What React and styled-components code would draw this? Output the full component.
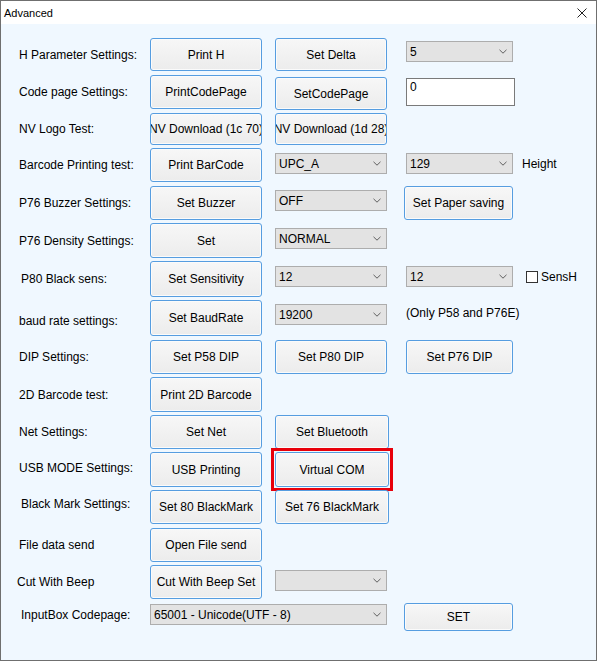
import React from "react";
import styled, { createGlobalStyle } from "styled-components";

const Global = createGlobalStyle`
  html, body { margin: 0; padding: 0; background: #ffffff; }
  * { box-sizing: border-box; }
  body { font-family: "Liberation Sans", Arial, sans-serif; font-size: 12px; color: #000; }
`;

const Window = styled.div`
  width: 597px;
  height: 661px;
  border: 1px solid #6f6f6f;
  display: flex;
  flex-direction: column;
  background: #f0f8ff;
`;

const TitleBar = styled.div`
  height: 23px;
  background: #ffffff;
  display: flex;
  align-items: center;
  justify-content: space-between;
  padding: 0 9px 0 3px;
  font-size: 11px;
  flex-shrink: 0;
`;

const Client = styled.div`
  flex: 1;
  padding: 14px 0 0 18px;
  display: flex;
  flex-direction: column;
`;

const Row = styled.div`
  height: ${(p) => p.$step}px;
  display: grid;
  grid-template-columns: 131px 125px 129px 118px 1fr;
  align-items: start;
  flex-shrink: 0;
`;

const Label = styled.div`
  grid-column: 1;
  height: ${(p) => p.$h}px;
  margin-top: ${(p) => p.$dy || 0}px;
  margin-left: ${(p) => p.$dx || 0}px;
  display: flex;
  align-items: center;
  white-space: nowrap;
  font-size: 12px;
`;

const BtnWrap = styled.div`
  grid-column: ${(p) => p.$col};
  position: relative;
  width: ${(p) => p.$w || 112}px;
  height: ${(p) => p.$h}px;
  margin-top: ${(p) => p.$mt || 0}px;
  margin-left: ${(p) => p.$ml || 0}px;
`;

const Btn = styled.button`
  width: 100%;
  height: 100%;
  padding: 0;
  margin: 0;
  border: 1px solid #569de0;
  border-radius: 3px;
  background: linear-gradient(#f7f7f7, #ececec);
  box-shadow: inset 0 0 0 1px #fbfbfb;
  font-family: "Liberation Sans", Arial, sans-serif;
  font-size: 12px;
  color: #000;
  white-space: nowrap;
  overflow: hidden;
  display: flex;
  align-items: center;
  justify-content: center;
`;

const Highlight = styled.div`
  position: absolute;
  inset: -4px;
  border: 3px solid #e8000b;
  pointer-events: none;
`;

const ComboBox = styled.div`
  grid-column: ${(p) => p.$col} / span ${(p) => p.$span || 1};
  width: ${(p) => p.$w || 112}px;
  height: 21px;
  margin-top: ${(p) => p.$mt || 0}px;
  margin-left: ${(p) => p.$ml || 0}px;
  background: #e3e3e3;
  border: 1px solid #adadad;
  display: flex;
  align-items: center;
  justify-content: space-between;
  padding: 0 5px 0 3px;
  font-size: 12px;
  white-space: nowrap;
`;

const TextBox = styled.div`
  grid-column: ${(p) => p.$col};
  width: 109px;
  height: 28px;
  margin-top: ${(p) => p.$mt || 0}px;
  margin-left: 2px;
  background: #fff;
  border: 1px solid #7a7a7a;
  padding: 1px 3px;
  font-size: 12px;
`;

const Note = styled.div`
  grid-column: ${(p) => p.$col};
  margin-top: ${(p) => p.$mt || 0}px;
  margin-left: ${(p) => p.$ml || 0}px;
  white-space: nowrap;
  font-size: 12px;
`;

const CheckWrap = styled.label`
  grid-column: ${(p) => p.$col};
  margin-top: ${(p) => p.$mt || 0}px;
  margin-left: 4px;
  display: flex;
  align-items: center;
  gap: 3px;
  font-size: 12px;
  white-space: nowrap;
`;

const CheckBox = styled.span`
  width: 12px;
  height: 12px;
  border: 1px solid #333;
  background: #fff;
  display: inline-block;
`;

const Chevron = () => (
  <svg width="8" height="5" viewBox="0 0 8 5">
    <path d="M0.5 0.8 L4 4.2 L7.5 0.8" stroke="#606060" strokeWidth="1" fill="none" />
  </svg>
);

const Close = () => (
  <svg width="10" height="10" viewBox="0 0 10 10">
    <path d="M0.5 0.5 L9.5 9.5 M9.5 0.5 L0.5 9.5" stroke="#222" strokeWidth="1" fill="none" />
  </svg>
);

const Button = ({ col, h, w, mt, ml, children, highlight }) => (
  <BtnWrap $col={col} $h={h} $w={w} $mt={mt} $ml={ml}>
    <Btn>{children}</Btn>
    {highlight && <Highlight />}
  </BtnWrap>
);

const Combo = ({ col, span, w, mt, ml, value }) => (
  <ComboBox $col={col} $span={span} $w={w} $mt={mt} $ml={ml}>
    <span>{value}</span>
    <Chevron />
  </ComboBox>
);

export default function App() {
  return (
    <>
      <Global />
      <Window>
        <TitleBar>
          <span>Advanced</span>
          <Close />
        </TitleBar>
        <Client>
          <Row $step={37}>
            <Label $h={33}>H Parameter Settings:</Label>
            <Button col={2} h={33}>Print H</Button>
            <Button col={3} h={33}>Set Delta</Button>
            <Combo col={4} w={107} ml={2} mt={3} value="5" />
          </Row>
          <Row $step={38}>
            <Label $h={34}>Code page Settings:</Label>
            <Button col={2} h={34}>PrintCodePage</Button>
            <Button col={3} h={33} mt={2}>SetCodePage</Button>
            <TextBox $col={4} $mt={3}>0</TextBox>
          </Row>
          <Row $step={35}>
            <Label $h={32}>NV Logo Test:</Label>
            <Button col={2} h={32}>NV Download (1c 70)</Button>
            <Button col={3} h={32}>NV Download (1d 28)</Button>
          </Row>
          <Row $step={38}>
            <Label $h={34}>Barcode Printing test:</Label>
            <Button col={2} h={34}>Print BarCode</Button>
            <Combo col={3} mt={5} value="UPC_A" />
            <Combo col={4} w={107} ml={2} mt={5} value="129" />
            <Note $col={5} $mt={9}>Height</Note>
          </Row>
          <Row $step={37}>
            <Label $h={34}>P76 Buzzer Settings:</Label>
            <Button col={2} h={34}>Set Buzzer</Button>
            <Combo col={3} mt={4} value="OFF" />
            <Button col={4} h={34} w={109}>Set Paper saving</Button>
          </Row>
          <Row $step={38}>
            <Label $h={35}>P76 Density Settings:</Label>
            <Button col={2} h={35}>Set</Button>
            <Combo col={3} mt={5} value="NORMAL" />
          </Row>
          <Row $step={39}>
            <Label $h={36} $dx={2}>P80 Black sens:</Label>
            <Button col={2} h={36}>Set Sensitivity</Button>
            <Combo col={3} mt={5} value="12" />
            <Combo col={4} w={107} ml={2} mt={5} value="12" />
            <CheckWrap $col={5} $mt={9}>
              <CheckBox />
              SensH
            </CheckWrap>
          </Row>
          <Row $step={40}>
            <Label $h={36} $dy={3}>baud rate settings:</Label>
            <Button col={2} h={36}>Set BaudRate</Button>
            <Combo col={3} mt={4} value="19200" />
            <Note $col={4} $ml={2} $mt={6}>(Only P58 and P76E)</Note>
          </Row>
          <Row $step={37}>
            <Label $h={34}>DIP Settings:</Label>
            <Button col={2} h={34}>Set P58 DIP</Button>
            <Button col={3} h={34}>Set P80 DIP</Button>
            <Button col={4} h={34} w={107} ml={2}>Set P76 DIP</Button>
          </Row>
          <Row $step={38}>
            <Label $h={35}>2D Barcode test:</Label>
            <Button col={2} h={35}>Print 2D Barcode</Button>
          </Row>
          <Row $step={37}>
            <Label $h={34}>Net Settings:</Label>
            <Button col={2} h={34}>Set Net</Button>
            <Button col={3} h={34} w={114}>Set Bluetooth</Button>
          </Row>
          <Row $step={38}>
            <Label $h={35} $dy={-2}>USB MODE Settings:</Label>
            <Button col={2} h={35}>USB Printing</Button>
            <Button col={3} h={35} w={114} highlight>Virtual COM</Button>
          </Row>
          <Row $step={38}>
            <Label $h={34} $dx={2} $dy={-3}>Black Mark Settings:</Label>
            <Button col={2} h={34}>Set 80 BlackMark</Button>
            <Button col={3} h={34} w={114}>Set 76 BlackMark</Button>
          </Row>
          <Row $step={37}>
            <Label $h={34}>File data send</Label>
            <Button col={2} h={34}>Open File send</Button>
          </Row>
          <Row $step={38}>
            <Label $h={34} $dx={-2}>Cut With Beep</Label>
            <Button col={2} h={34}>Cut With Beep Set</Button>
            <Combo col={3} mt={5} value="" />
          </Row>
          <Row $step={30}>
            <Label $h={24} $dx={2}>InputBox Codepage:</Label>
            <Combo col={2} span={2} w={237} mt={1} value="65001 - Unicode(UTF - 8)" />
            <Button col={4} h={28} w={109}>SET</Button>
          </Row>
        </Client>
      </Window>
    </>
  );
}
